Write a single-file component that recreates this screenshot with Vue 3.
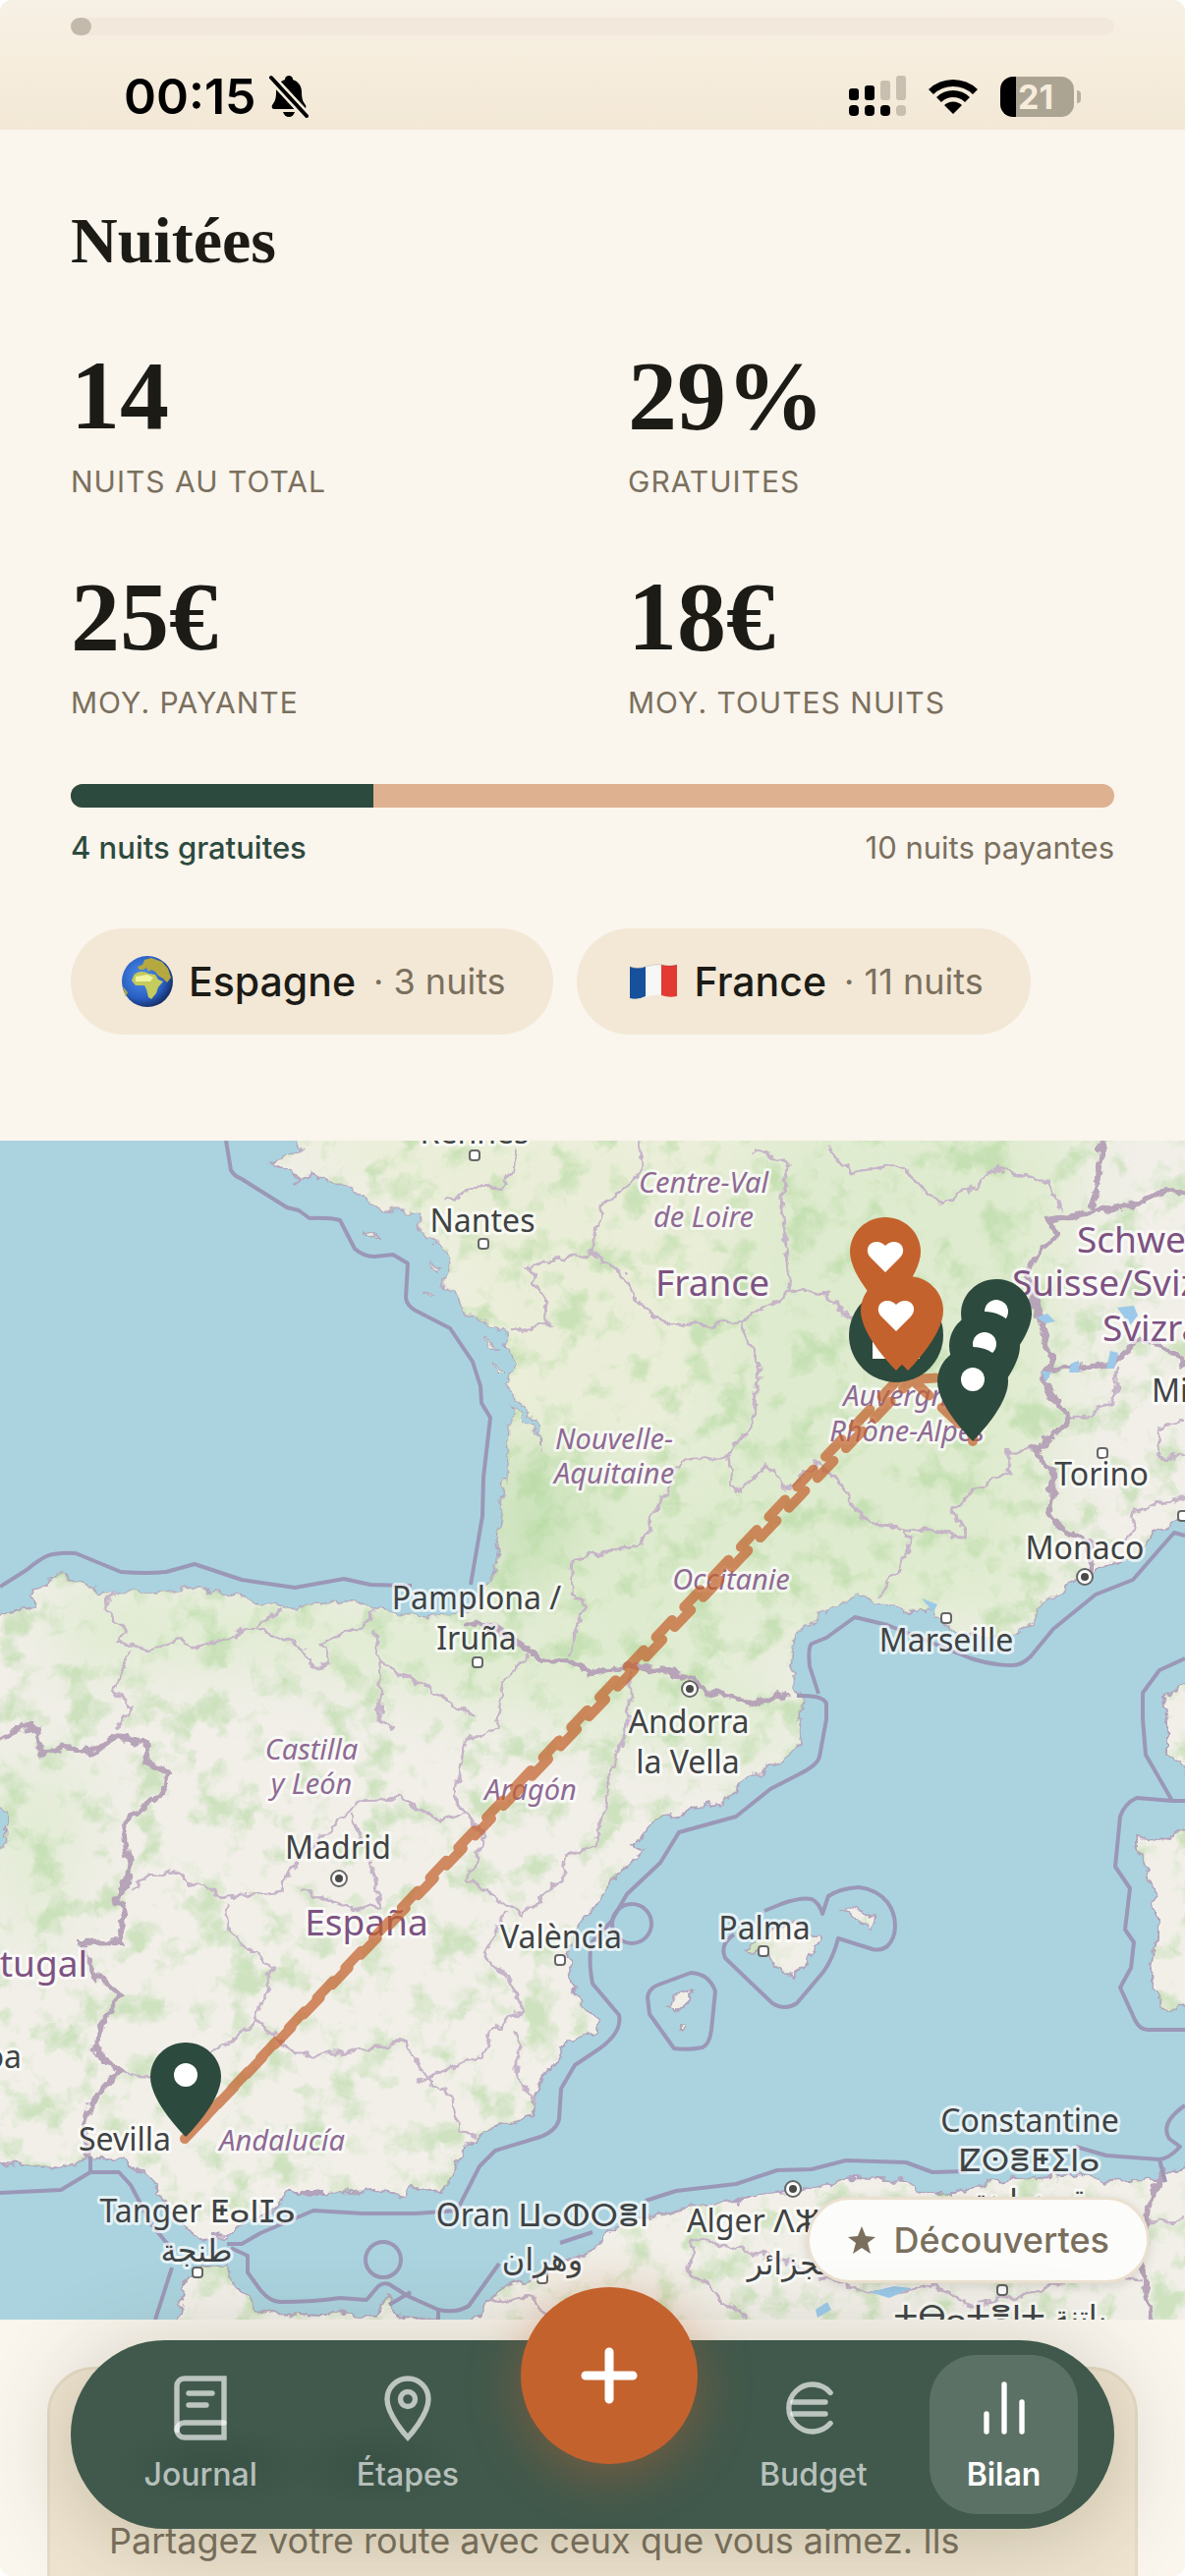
<script setup>
const stats = [
  { value: '14', label: 'Nuits au total' },
  { value: '29%', label: 'Gratuites' },
  { value: '25€', label: 'Moy. payante' },
  { value: '18€', label: 'Moy. toutes nuits' },
]
const freeShare = 29

/* mainland, north Africa, Sardinia, Corsica, Balearics, small islands */
const land = [
  'M296 -20L306 10L275 22L298 33L302 45L317 32L342 45L369 55L385 68L408 72L429 76L425 91L446 102L460 121L452 141L473 175L517 196L515 209L525 229L513 248L542 280L554 322L540 290L521 269L517 328L512 366L506 416L499 451L480 475L460 481L435 485L385 477L358 468L300 475L269 472L235 463L198 454L169 460L102 461L87 447L58 443L29 462L35 475L-20 490V664L6 680V715L-20 727V1040L23 1042L60 1048L90 1034L123 1036L148 1052L163 1067L160 1073L181 1099L200 1117L231 1115L250 1099L277 1091L294 1071L331 1071L385 1069L412 1073L421 1064L450 1071L465 1044L473 1024L508 1002L546 994L542 977L558 945L577 921L603 907L611 897L592 882L581 858L577 826L588 803L603 783L615 763L634 739L655 723L645 718L668 692L741 670L751 654L795 632L816 613L813 585L820 573L809 558L805 512L818 493L841 481L872 460L895 472L926 481L949 481L972 500L1022 508L1049 493L1057 474L1103 443L1141 428L1157 420L1176 397L1226 370V-20Z',
  'M175 1220L188 1166L196 1147H231L238 1162L262 1190L280 1194L330 1196L340 1192L380 1197L394 1175L402 1196L477 1204L500 1182L515 1166L554 1154L577 1139L603 1131L622 1107L661 1095L699 1085L757 1079L788 1071L818 1069L865 1056L922 1058L941 1071H976L1011 1058L1057 1056L1103 1052L1130 1060L1168 1058L1226 1035V1220Z',
  'M1226 690L1180 712L1157 710V723L1170 743L1176 779V810L1170 850L1184 884L1226 878Z',
  'M1226 540L1184 565L1188 592V625L1226 660Z',
  'M757 824L776 810L811 793L834 812L826 830L807 850L788 840L780 826Z',
  'M857 782L876 781L891 797L888 803L868 791Z',
  'M680 882L686 870L705 866L699 878L688 886ZM690 900h6v4h-6z',
  'M374 93L384 92L386 99L378 99ZM438 127L446 130L442 135ZM432 156L440 158L436 161ZM491 203L508 210L500 211ZM503 226L514 238L508 238Z',
].join('')

const seaLines = [
  'M230 0L235 30Q238 36 246 39L292 68L304 71L315 79Q335 78 346 81L361 110Q370 118 381 118L400 116L415 125L413 160Q414 168 423 173L458 191L481 225L489 250L490 267L499 282L492 343L491 382L479 452',
  'M0 454L27 437Q45 422 54 421Q66 419 77 420L123 439Q150 441 169 439L198 431L246 447L300 455L350 446L377 452L419 453',
  'M0 1071L62 1068L92 1050V1034M92 1050H121L133 1063L154 1103L177 1131M175 1147L158 1200',
  'M231 1123H246L265 1112L319 1089L369 1092L423 1092L465 1089L488 1044L504 1028L550 1014Q566 1008 569 996L571 965L585 941L603 929Q634 910 630 890L603 858Q598 830 603 815L622 795L638 767L672 735L691 704L749 688L784 660L811 646Q832 636 834 627L841 589V573Q838 564 811 565M833 563L824 535Q822 516 826 512L841 506L870 485L903 493L988 527Q1010 534 1030 534Q1040 534 1049 525L1072 497L1115 462L1153 447L1180 416L1195 399L1206 402',
  'M235 1127L252 1135V1152L265 1170Q275 1182 285 1182Q320 1182 346 1178L373 1180L385 1166Q390 1162 396 1164L415 1176L446 1190Q465 1194 477 1186L508 1143M396 1185L418 1172M446 1190V1200M570 1122L603 1111',
  'M657 1079L688 1069L749 1062L791 1048L826 1047L861 1038L922 1040L949 1050L984 1049M1095 1024L1126 1033L1180 1037Q1190 1036 1201 1024L1190 1016Q1180 1000 1206 982M1180 1037L1186 1060',
  'M778 784L795 777Q815 770 826 772Q834 776 837 787L843 769Q855 761 874 760Q892 762 903 775Q911 786 911 799Q911 812 903 820Q896 825 888 823L853 812Q848 832 838 846L811 878Q799 886 786 878L738 832Q732 818 747 808',
  'M659 872Q660 864 668 860L703 847Q722 848 728 866L724 905Q722 920 715 923Q700 926 686 924L661 889Z',
  'M1206 527L1180 539L1163 562V589L1166 625L1193 672H1206M1193 672L1157 669Q1145 674 1140 688L1135 739L1150 761L1145 803L1154 816L1151 842L1140 862L1155 895Q1160 905 1168 905H1206',
]

const countryBorders = [
  'M0 609L23 597L38 599L42 625L69 617L96 623L112 609L148 611L152 634L173 644L158 670L125 696L133 747L117 771L127 787L121 816L83 817L98 850L123 872L102 901L98 925L123 947L92 980L85 1000L90 1034',
  'M471 491L505 497L538 518L554 531L577 530L603 542L641 533L688 542L718 558L768 573L803 563',
  'M1122 0L1113 72L1068 81L1074 98L1045 133L1061 190L1070 229L1061 244L1088 286L1053 313L1074 343L1066 378L1088 401L1111 408L1107 443',
  'M1113 72L1153 66L1172 56L1188 49L1206 56',
  'M1068 232L1130 229L1161 202L1191 213L1206 230',
  'M1184 1044L1168 1087L1161 1143L1172 1200',
]

const regionBorders = [
  'M525 7L521 28L512 47L484 48L456 60',
  'M603 114L562 121L537 129L554 164L558 188L519 194',
  'M603 422L583 426L581 458L594 474L577 523',
  'M115 462L108 477L129 500L121 512L154 519L185 508L200 516L262 493L288 477',
  'M262 496L308 516L319 535L335 531L327 512L369 493L385 478',
  'M379 497L388 531L431 554L481 588',
  'M388 531L385 589L400 600',
  'M131 519L115 558L135 577L119 599',
  'M537 523L508 558L504 599L473 613L462 668L492 708L477 751L531 787L573 751L577 727L603 719L615 684L626 629L641 589V540',
  'M133 759L173 743L227 771L285 763L304 731L331 704L365 672L408 670L446 692L473 684',
  'M358 684L381 747L387 779L350 781L308 763',
  'M231 779L235 806L277 842L262 897L215 929L192 957L123 947',
  'M262 897L300 929L346 929L415 917L431 953L458 973L465 1004L485 1014',
  'M515 783L494 830L517 850L533 886L500 905L492 929L427 957M527 905V953L546 980',
  'M653 0L649 37L611 68L603 114L630 133L653 167L680 188L753 185L772 229L768 282L741 324L695 324L665 382L653 412L603 422',
  'M768 10L803 22L795 60L805 152L753 185M805 152L841 156L868 183',
  'M845 7L864 32L918 24L957 66L984 53L1011 28L1065 41L1080 72',
  'M741 324L749 359L780 332L799 355L830 328L857 351L876 387L922 393L984 403L968 378L991 355L1030 336L1022 317L1053 313',
  'M922 393L926 420L895 464',
  'M1088 286L1135 265L1137 232M1206 320L1180 325L1178 292L1206 285M1206 365L1155 375L1148 410',
  'M500 1182L540 1175L560 1200M707 1119L772 1131L834 1154L888 1174L949 1166L988 1186L1065 1170L1100 1150L1160 1160M707 1119L700 1150L740 1185L760 1200M834 1154L850 1130M1168 1100L1206 1098',
]

/* k: region or country (a city when absent); a: text anchor, middle by default */
const labels = [
  { x: 483, y: 3, t: 'Rennes' },
  { x: 491, y: 93, t: 'Nantes' },
  { x: 485, y: 477, t: 'Pamplona /' },
  { x: 485, y: 518, t: 'Iruña' },
  { x: 701, y: 603, t: 'Andorra' },
  { x: 700, y: 644, t: 'la Vella' },
  { x: 963, y: 520, t: 'Marseille' },
  { x: 1104, y: 426, t: 'Monaco' },
  { x: 1121, y: 351, t: 'Torino' },
  { x: 1172, y: 266, t: 'Milano', a: 'start' },
  { x: 344, y: 731, t: 'Madrid' },
  { x: 571, y: 822, t: 'València' },
  { x: 778, y: 813, t: 'Palma' },
  { x: 127, y: 1028, t: 'Sevilla' },
  { x: 22, y: 944, t: 'Lisboa', a: 'end' },
  { x: 201, y: 1101, t: 'Tanger ⵟⴰⵏⵊⴰ' },
  { x: 200, y: 1141, t: 'طنجة' },
  { x: 552, y: 1105, t: 'Oran ⵡⴰⵀⵔⴻⵏ' },
  { x: 552, y: 1150, t: 'وهران' },
  { x: 699, y: 1111, t: 'Alger ⴷⵣⴰⵢⴻⵔ', a: 'start' },
  { x: 807, y: 1154, t: 'الجزائر' },
  { x: 1048, y: 1009, t: 'Constantine' },
  { x: 1048, y: 1049, t: 'ⵇⵙⴻⵟⵉⵏⴰ' },
  { x: 1048, y: 1090, t: 'قسنطينة' },
  { x: 1018, y: 1208, t: 'ⵜⴱⴰⵜⴻⵏⵜ باتنة' },
  { x: 716, y: 53, t: 'Centre-Val', k: 'region' },
  { x: 716, y: 88, t: 'de Loire', k: 'region' },
  { x: 625, y: 314, t: 'Nouvelle-', k: 'region' },
  { x: 625, y: 349, t: 'Aquitaine', k: 'region' },
  { x: 923, y: 270, t: 'Auvergne-', k: 'region' },
  { x: 923, y: 306, t: 'Rhône-Alpes', k: 'region' },
  { x: 744, y: 457, t: 'Occitanie', k: 'region' },
  { x: 317, y: 630, t: 'Castilla', k: 'region' },
  { x: 317, y: 665, t: 'y León', k: 'region' },
  { x: 540, y: 671, t: 'Aragón', k: 'region' },
  { x: 287, y: 1028, t: 'Andalucía', k: 'region' },
  { x: 725, y: 158, t: 'France', k: 'country' },
  { x: 373, y: 809, t: 'España', k: 'country' },
  { x: 89, y: 851, t: 'Portugal', k: 'country', a: 'end' },
  { x: 1096, y: 114, t: 'Schweiz/', k: 'country', a: 'start' },
  { x: 1030, y: 158, t: 'Suisse/Svizzera/', k: 'country', a: 'start' },
  { x: 1122, y: 204, t: 'Svizra', k: 'country', a: 'start' },
]

const towns = [
  [483, 15], [492, 105], [486, 531], [963, 486], [1122, 318], [570, 834],
  [777, 825], [201, 1152], [552, 1158], [1020, 1170], [1204, 382],
]
const capitals = [[702, 558], [1104, 444], [345, 751], [807, 1067]]

const pinShape = 'M36 0C16 0 0 16 0 35C0 61 36 96 36 96S72 61 72 35C72 16 56 0 36 0Z'
const heart = 'M36 56L21 41C15 35 18 25 27 25C31 25 34 27 36 29C38 27 41 25 45 25C54 25 57 35 51 41Z'
const favourites = [[865, 78], [888, 138], [876, 138]]
const stops = [[978, 141], [966, 174], [954, 210], [153, 918]]
</script>

<template>
  <div class="app">
    <header class="status">
      <div class="track"><div class="thumb"></div></div>
      <div class="status-row">
        <div class="clock">
          <span>00:15</span>
          <svg width="42" height="44" viewBox="0 0 42 44" aria-hidden="true">
            <path d="M21 1c2 0 4 1 4 4c6 2 9 7 9 13c0 8 2 10 4 13c1 2 0 4-2 4H6c-2 0-3-2-2-4c2-3 4-5 4-13c0-6 3-11 9-13c0-3 2-4 4-4zM15 38h12c-1 3-3 5-6 5s-5-2-6-5z" />
            <path d="M3 3L39 42" stroke="#f5ecdc" stroke-width="9" />
            <path d="M3 3L39 42" stroke="#000" stroke-width="4" stroke-linecap="round" />
          </svg>
        </div>
        <div class="signals">
          <svg width="58" height="42" viewBox="0 0 58 42" aria-hidden="true">
            <rect y="13" width="10" height="12" rx="3" />
            <rect x="16" y="10" width="10" height="15" rx="3" />
            <rect x="32" y="5" width="10" height="20" rx="3" fill="#c8bfb0" />
            <rect x="48" y="0" width="10" height="25" rx="3" fill="#c8bfb0" />
            <rect y="30" width="10" height="11" rx="4" />
            <rect x="16" y="30" width="10" height="11" rx="4" />
            <rect x="32" y="30" width="10" height="11" rx="4" />
            <rect x="48" y="30" width="10" height="11" rx="4" fill="#c8bfb0" />
          </svg>
          <svg width="52" height="38" viewBox="0 0 52 38" aria-hidden="true">
            <path d="M1 12A36 36 0 0 1 51 12L46 17A29 29 0 0 0 6 17ZM9 20A24 24 0 0 1 43 20L38 25A17 17 0 0 0 14 25ZM17 28A13 13 0 0 1 35 28L26 37Z" />
          </svg>
          <div class="battery"><span>21</span></div>
        </div>
      </div>
    </header>

    <section class="nights">
      <h2>Nuitées</h2>
      <dl class="stats">
        <div v-for="s in stats" :key="s.label" class="stat">
          <dt>{{ s.label }}</dt>
          <dd>{{ s.value }}</dd>
        </div>
      </dl>
      <div class="split"><div class="split-free" :style="{ width: freeShare + '%' }"></div></div>
      <div class="legend"><span class="free">4 nuits gratuites</span><span>10 nuits payantes</span></div>
      <ul class="chips">
        <li>
          <svg width="54" height="54" viewBox="0 0 54 54" aria-hidden="true">
            <defs>
              <radialGradient id="globe" cx=".4" cy=".4" r=".62">
                <stop offset="0" stop-color="#4f8fe6" /><stop offset=".7" stop-color="#2a5fc4" /><stop offset="1" stop-color="#173069" />
              </radialGradient>
            </defs>
            <circle cx="27" cy="27" r="26" fill="url(#globe)" />
            <path d="M13 21C16 16 24 16 28 19L35 20L38 25L43 27L38 33L36 39L31 45L28 43L26 35L24 31L15 31L11 26Z" fill="#c5cb5c" />
            <path d="M19 15L17 12L22 10L24 5L31 3L42 7L48 14L51 23L47 28L43 24L38 21L35 17L31 15L28 17L26 13L23 15Z" fill="#b5a83f" />
            <path d="M15 22L27 20L33 23L30 27L15 27Z" fill="#eff3a2" />
            <path d="M2 32L7 38L5 43Z" fill="#a7a948" />
          </svg>
          <strong>Espagne</strong><span>· 3 nuits</span>
        </li>
        <li>
          <svg width="54" height="54" viewBox="0 0 54 54" aria-hidden="true">
            <path d="M3 12Q11 15 19 12V42Q11 46 3 44Z" fill="#17509b" />
            <path d="M19 12Q27 9 35 10V41Q27 40 19 43Z" fill="#f7f7f5" />
            <path d="M35 10Q43 12 51 10V42Q43 44 35 41Z" fill="#e23b34" />
            <path d="M3 12Q11 15 19 12Q33 8 39 11Q45 12 51 10" fill="none" stroke="#00000022" stroke-width="1" />
          </svg>
          <strong>France</strong><span>· 11 nuits</span>
        </li>
      </ul>
    </section>

    <section class="map" aria-label="Carte du voyage">
      <svg class="map-canvas" viewBox="0 0 1206 1200">
        <defs>
          <filter id="rough" x="-5%" y="-5%" width="110%" height="110%" color-interpolation-filters="sRGB">
            <feTurbulence type="fractalNoise" baseFrequency=".07" numOctaves="3" seed="4" />
            <feDisplacementMap in="SourceGraphic" scale="14" xChannelSelector="R" yChannelSelector="G" />
          </filter>
          <filter id="woods" x="0" y="0" width="100%" height="100%" color-interpolation-filters="sRGB">
            <feTurbulence type="fractalNoise" baseFrequency=".03" numOctaves="6" seed="11" />
            <feColorMatrix values="0 0 0 0 .68  0 0 0 0 .84  0 0 0 0 .6  0 4 0 0 -2" />
            <feComposite in2="SourceGraphic" operator="in" />
          </filter>
          <filter id="soft" x="-20%" y="-20%" width="140%" height="140%" color-interpolation-filters="sRGB">
            <feGaussianBlur stdDeviation="30" />
          </filter>
          <clipPath id="onLand"><path :d="land" /></clipPath>
        </defs>

        <rect width="1206" height="1200" fill="#aad3df" />
        <g filter="url(#rough)">
          <path :d="land" fill="#f1efe8" stroke="#b3a3bd" stroke-width="2" />
          <g clip-path="url(#onLand)">
            <g filter="url(#soft)">
              <path d="M260 -40H760L800 180L640 340L510 330L440 100Z" fill="#eaeed8" />
              <path d="M770 -40H1100L1060 490L820 500L640 530L500 450L515 300L700 330Z" fill="#dfebcf" />
              <path d="M505 300L590 340L560 450L490 470Z" fill="#c5e0b4" />
              <path d="M60 450L480 480L810 550L790 630L600 600L300 530L60 540Z" fill="#dfebd0" />
              <path d="M0 640H90L60 800H0Z" fill="#e0ebd2" />
            </g>
          </g>
          <path :d="land" filter="url(#woods)" opacity=".5" />
          <path v-for="d in regionBorders" :key="d" :d="d" class="border" />
          <path v-for="d in countryBorders" :key="d" :d="d" class="border national" />
        </g>
        <g fill="#9cc9ea">
          <path d="M1055 180L1066 176L1074 184L1064 186ZM1137 170L1154 168L1158 178L1150 188ZM1090 227L1098 224V236H1088ZM1126 232L1130 214L1138 216L1134 232ZM1060 234L1070 236L1064 246ZM938 466L954 472L950 480ZM885 1172L910 1166L928 1168L905 1178ZM830 1190L842 1182L846 1190L832 1198Z" />
        </g>
        <path v-for="d in seaLines" :key="d" :d="d" class="sea-line" />
        <circle cx="643" cy="797" r="20" class="sea-line" />
        <circle cx="390" cy="1139" r="18" class="sea-line" />

        <rect v-for="[x, y] in towns" :key="x + '-' + y" :x="x - 5" :y="y - 5" width="10" height="10" rx="3" class="town" />
        <g v-for="[x, y] in capitals" :key="x + '-' + y">
          <circle :cx="x" :cy="y" r="8" class="town" /><circle :cx="x" :cy="y" r="4" fill="#4a4a48" />
        </g>
        <text
          v-for="l in labels" :key="l.t" :x="l.x" :y="l.y"
          class="label" :class="l.k" :text-anchor="l.a || 'middle'"
        >{{ l.t }}</text>

        <g class="route">
          <path d="M914 243L188 1016" />
          <path d="M928 243L188 1016" stroke-dashoffset="11" />
          <path d="M928 243L990 301V306" />
          <path d="M928 243L980 240" />
        </g>

        <g transform="translate(865 78)"><path :d="pinShape" fill="#c4622d" /><path :d="heart" fill="#fff" /></g>
        <circle cx="912" cy="198" r="48" fill="#2d4a3e" />
        <rect x="888" y="190" width="48" height="32" fill="#fff" />
        <g v-for="[x, y] in favourites.slice(1)" :key="x" :transform="`translate(${x} ${y})`">
          <path :d="pinShape" fill="#c4622d" /><path :d="heart" fill="#fff" />
        </g>
        <g v-for="[x, y] in stops" :key="x" :transform="`translate(${x} ${y})`">
          <path :d="pinShape" fill="#2d4a3e" /><circle cx="36" cy="33" r="12" fill="#fff" />
        </g>
      </svg>
      <button type="button" class="discover">
        <svg width="30" height="30" viewBox="0 0 30 30" aria-hidden="true">
          <path d="M15 1L19 11L29 12L21 18L24 29L15 23L6 29L9 18L1 12L11 11Z" fill="#7a6f5d" />
        </svg>
        Découvertes
      </button>
    </section>

    <section class="share">
      <p>Partagez votre route avec ceux que vous aimez. Ils</p>
    </section>

    <nav class="tabs">
      <a href="#journal">
        <svg viewBox="0 0 24 24" aria-hidden="true">
          <path d="M4 19.500A2.500 2.500 0 0 1 6.500 17H20" />
          <path d="M6.500 2H20V22H6.500A2.500 2.500 0 0 1 4 19.500V4.500A2.500 2.500 0 0 1 6.500 2Z" />
          <path d="M8 7H16M8 11H14" />
        </svg>
        Journal
      </a>
      <a href="#etapes">
        <svg viewBox="0 0 24 24" aria-hidden="true">
          <path d="M12 22S19 14.500 19 9A7 7 0 0 0 5 9C5 14.500 12 22 12 22Z" />
          <circle cx="12" cy="9" r="2.500" />
        </svg>
        Étapes
      </a>
      <button type="button" class="add" aria-label="Ajouter">
        <svg viewBox="0 0 72 72" aria-hidden="true"><path d="M36 12V60M12 36H60" /></svg>
      </button>
      <a href="#budget">
        <svg viewBox="0 0 24 24" aria-hidden="true">
          <path d="M17.700 6.800A8 8 0 1 0 17.700 17.200" />
          <path d="M5 10H16M5 14H16" />
        </svg>
        Budget
      </a>
      <a href="#bilan" class="active" aria-current="page">
        <svg viewBox="0 0 24 24" aria-hidden="true"><path d="M6 14V20M12 4V20M18 10V20" /></svg>
        Bilan
      </a>
    </nav>
  </div>
</template>

<style>
body {
  margin: 0;
  background: #fff;
}
</style>

<style scoped>
.app {
  position: relative;
  height: 100vh;
  overflow: hidden;
  border-radius: 12px;
  background: #faf5ed;
  color: #1c1b16;
  font-family: Inter, "Liberation Sans", sans-serif;
}
.status {
  box-sizing: border-box;
  height: 132px;
  padding: 18px 72px 0;
  background: linear-gradient(#f7f0e5, #f6eddd 50%, #f3e8d6);
}
.track {
  height: 18px;
  border-radius: 9px;
  background: #f2e9dc;
}
.thumb {
  width: 21px;
  height: 18px;
  border-radius: 9px;
  background: #c3baab;
}
.status-row {
  display: flex;
  justify-content: space-between;
  align-items: center;
  height: 60px;
  margin-top: 32px;
  padding: 0 41px 0 54px;
  color: #000;
}
.clock {
  display: flex;
  align-items: center;
  gap: 12px;
  font-size: 50px;
  font-weight: 600;
}
.signals {
  display: flex;
  align-items: center;
  gap: 22px;
}
.battery {
  position: relative;
  box-sizing: border-box;
  width: 75px;
  height: 41px;
  padding-left: 18px;
  border-radius: 13px;
  background: linear-gradient(90deg, #000 16px, #aca493 16px);
  color: #f6ecdc;
  font-size: 34px;
  font-weight: 700;
  line-height: 41px;
}
.battery::after {
  content: "";
  position: absolute;
  right: -7px;
  top: 14px;
  width: 4px;
  height: 13px;
  border-radius: 0 4px 4px 0;
  background: #b8af9f;
}

.nights {
  padding: 75px 72px 108px;
}
h2 {
  margin: 0;
  font: bold 66px/76px Georgia, "Liberation Serif", serif;
}
.stats {
  display: grid;
  grid-template-columns: 1fr 1fr;
  gap: 62px 72px;
  margin: 68px 0 0;
}
.stat {
  display: flex;
  flex-direction: column-reverse;
}
dt {
  margin-top: 12px;
  color: #7a705e;
  font-size: 30px;
  line-height: 48px;
  letter-spacing: 1px;
  text-transform: uppercase;
}
dd {
  margin: 0;
  font: bold 100px/103px Georgia, "Liberation Serif", serif;
}
.split {
  height: 24px;
  margin-top: 59px;
  border-radius: 12px;
  overflow: hidden;
  background: #deb191;
}
.split-free {
  height: 100%;
  background: #2d4a3e;
}
.legend {
  display: flex;
  justify-content: space-between;
  margin-top: 18px;
  color: #7a705e;
  font-size: 31px;
  line-height: 45px;
}
.free {
  color: #2d4a3e;
  font-weight: 500;
}
.chips {
  display: flex;
  gap: 24px;
  margin: 60px 0 0;
  padding: 0;
  list-style: none;
}
.chips li {
  display: flex;
  align-items: center;
  height: 108px;
  padding: 0 48px 0 51px;
  border-radius: 54px;
  background: #f3e8d6;
  color: #7a705e;
  font-size: 36px;
}
.chips strong {
  margin: 0 18px 0 15px;
  color: #1c1b16;
  font-size: 41px;
  font-weight: 500;
}

.map {
  position: relative;
}
.map-canvas {
  display: block;
  width: 100%;
}
.border {
  fill: none;
  stroke: #c6b4c8;
  stroke-width: 3;
}
.national {
  stroke: #b7a4b8;
  stroke-width: 6;
}
.sea-line {
  fill: none;
  stroke: #9b97b7;
  stroke-width: 4;
  stroke-linejoin: round;
}
.town {
  fill: #fff;
  stroke: #666;
  stroke-width: 2;
}
.label {
  fill: #3f4344;
  stroke: #ffffffb0;
  stroke-width: 6;
  stroke-linejoin: round;
  paint-order: stroke;
  font: 32px "Noto Sans", "DejaVu Sans", sans-serif;
}
.region {
  fill: #8f6a94;
  font-size: 29px;
  font-style: italic;
}
.country {
  fill: #7d5282;
  font-size: 37px;
}
.route {
  fill: none;
  stroke: #c4622d;
  stroke-width: 10;
  stroke-linecap: round;
  stroke-dasharray: 24 18;
  opacity: .72;
}
.discover {
  position: absolute;
  right: 36px;
  bottom: 37px;
  display: flex;
  align-items: center;
  gap: 18px;
  height: 88px;
  padding: 0 38px;
  border: 3px solid #ebe0d0;
  border-radius: 44px;
  background: #fcfcfa;
  box-shadow: 0 3px 12px #0000001f;
  color: #7a6f5d;
  font: 500 36px Inter, sans-serif;
}

.share {
  box-sizing: border-box;
  height: 420px;
  margin: 48px 48px 0;
  padding: 147px 60px 0;
  border: 3px solid #e6dbc6;
  border-radius: 48px;
  background: #f0e5d1;
}
.share p {
  margin: 0;
  color: #7a705e;
  font-size: 36px;
  line-height: 54px;
}

.tabs {
  position: absolute;
  right: 72px;
  bottom: 48px;
  left: 72px;
  display: flex;
  justify-content: space-around;
  padding: 15px 24px;
  border-radius: 96px;
  background:
    radial-gradient(105px 42px at 148px 128px, #395145, #39514500),
    radial-gradient(90px 42px at 310px 128px, #395145, #39514500),
    #40594c;
  box-shadow: 0 12px 90px #5a5a3c4d;
}
.tabs a {
  display: flex;
  flex-direction: column;
  align-items: center;
  gap: 9px;
  padding: 18px 38px;
  border-radius: 48px;
  color: #ffffffa6;
  font-size: 32px;
  font-weight: 500;
  line-height: 45px;
  text-decoration: none;
}
.tabs svg {
  width: 72px;
  height: 72px;
  fill: none;
  stroke: currentColor;
  stroke-width: 1.800;
  stroke-linecap: round;
}
.tabs .active {
  background: #ffffff26;
  color: #fff;
  font-weight: 600;
}
.tabs .add {
  display: grid;
  place-items: center;
  width: 180px;
  height: 180px;
  margin: -69px 0 0;
  padding: 0;
  border: 0;
  border-radius: 50%;
  background: #c4622d;
  box-shadow: 0 12px 54px #c4622d70;
  color: #fff;
}
.tabs .add svg {
  stroke-width: 9;
}
</style>
